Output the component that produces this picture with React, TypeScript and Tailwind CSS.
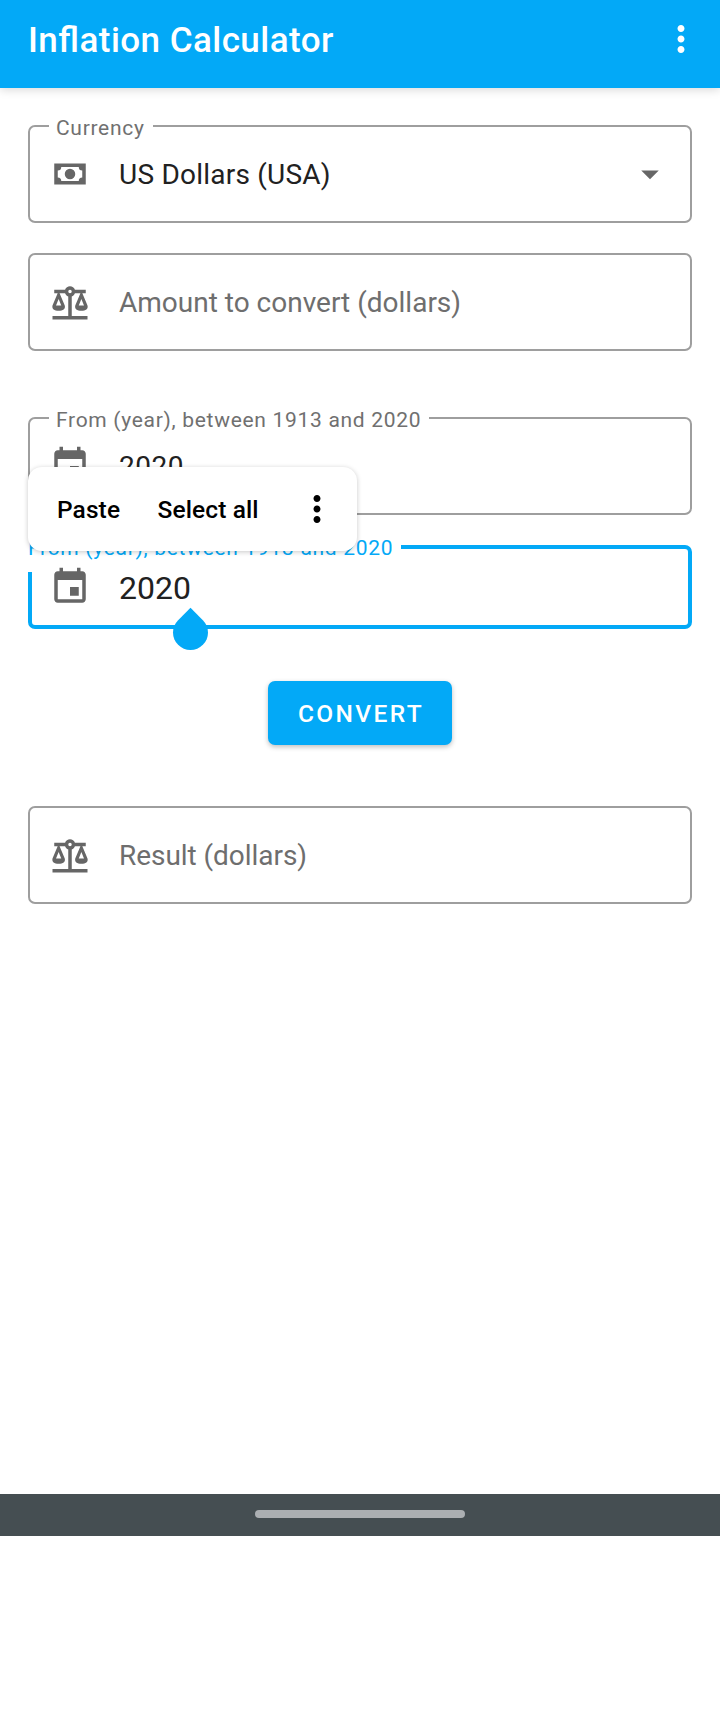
import type { ReactNode } from "react";

const CASH =
  "M3,6H21V18H3V6M12,9A3,3 0 0,1 15,12A3,3 0 0,1 12,15A3,3 0 0,1 9,12A3,3 0 0,1 12,9M7,8A2,2 0 0,1 5,10V14A2,2 0 0,1 7,16H17A2,2 0 0,1 19,14V10A2,2 0 0,1 17,8H7Z";
const SCALE =
  "M12,3C10.73,3 9.6,3.8 9.18,5H3V7H4.95L2,14C1.53,16 3,17 5.5,17C8,17 9.56,16 9,14L6.05,7H9.17C9.5,7.85 10.15,8.5 11,8.83V20H2V22H22V20H13V8.82C13.85,8.5 14.5,7.85 14.82,7H17.95L15,14C14.53,16 16,17 18.5,17C21,17 22.56,16 22,14L19.05,7H21V5H14.83C14.4,3.8 13.27,3 12,3M12,5A1,1 0 0,1 13,6A1,1 0 0,1 12,7A1,1 0 0,1 11,6A1,1 0 0,1 12,5M5.5,10.25L7,14H4L5.5,10.25M18.5,10.25L20,14H17L18.5,10.25Z";
const EVENT =
  "M17 12h-5v5h5v-5zM16 1v2H8V1H6v2H5c-1.11 0-1.99.9-1.99 2L3 19c0 1.1.89 2 2 2h14c1.1 0 2-.9 2-2V5c0-1.1-.9-2-2-2h-1V1h-2zm3 18H5V8h14v11z";
const MORE =
  "M12 8c1.1 0 2-.9 2-2s-.9-2-2-2-2 .9-2 2 .9 2 2 2zm0 2c-1.1 0-2 .9-2 2s.9 2 2 2 2-.9 2-2-.9-2-2-2zm0 6c-1.1 0-2 .9-2 2s.9 2 2 2 2-.9 2-2-.9-2-2-2z";
const ARROW = "M7 10l5 5 5-5z";

function Icon({ d, className = "" }: { d: string; className?: string }) {
  return (
    <svg viewBox="0 0 24 24" className={`size-[42px] shrink-0 ${className}`} fill="currentColor">
      <path d={d} fillRule="evenodd" />
    </svg>
  );
}

function Field({
  label,
  icon,
  children,
  trailing,
  className = "",
}: {
  label?: string;
  icon: string;
  children: ReactNode;
  trailing?: ReactNode;
  className?: string;
}) {
  return (
    <div
      className={`relative flex h-[98px] items-center rounded-[7px] border-2 border-[#9e9e9e] px-[19px] text-[28px] leading-[34px] ${className}`}
    >
      {label && (
        <span className="absolute -top-[13px] left-[19px] bg-white pr-2 pl-[7px] text-[21px] leading-[28px] tracking-[0.7px] whitespace-nowrap text-[#707070]">
          {label}
        </span>
      )}
      <Icon d={icon} className="text-[#666666]" />
      <div className="ml-7 flex-1 pt-0.5 whitespace-nowrap">{children}</div>
      {trailing}
    </div>
  );
}

export default function App() {
  return (
    <div className="flex h-[1712px] w-[720px] flex-col bg-white font-['Roboto',sans-serif] text-[#212121]">
      <header className="flex h-[88px] shrink-0 items-start justify-between bg-[#03a9f7] pt-[18px] pr-[18px] pl-7 text-white shadow-[0_2px_9px_rgba(0,0,0,0.15)]">
        <h1 className="pt-px text-[35px] leading-[44px] font-medium tracking-[0.45px] [font-feature-settings:'liga'_1]">
          Inflation Calculator
        </h1>
        <Icon d={MORE} />
      </header>

      <main className="flex flex-1 flex-col px-7 pt-[37px]">
        <Field label="Currency" icon={CASH} trailing={<Icon d={ARROW} className="text-[#666666]" />}>
          <span className="tracking-[0.22px]">US Dollars (USA)</span>
        </Field>
        <Field icon={SCALE} className="mt-[30px] text-[#6e6e6e]">
          Amount to convert (dollars)
        </Field>
        <Field label="From (year), between 1913 and 2020" icon={EVENT} className="mt-[66px]">
          <span className="tracking-[0.5px]">2020</span>
        </Field>

        <div className="relative mt-[30px] flex h-[84px] items-center rounded-[7px] border-4 border-[#03a9f7] px-[17px]">
          <span className="absolute -top-[16px] -left-1 h-[39px] w-[373px] overflow-hidden bg-white pt-px text-[21px] leading-[28px] tracking-[0.7px] whitespace-nowrap text-[#03a9f7]">
            From (year), between 1913 and 2020
          </span>
          <Icon d={EVENT} className="relative text-[#666666]" />
          <span className="relative ml-7 pt-0.5 text-[32px] leading-[38px]">2020</span>
          <div className="absolute top-[66px] left-[141px] size-[35px] rotate-45 rounded-full rounded-tl-[1px] bg-[#03a9f7]" />
          <div className="absolute -top-[82px] -left-1 flex h-[84px] w-[329px] items-center rounded-[14px] bg-white pt-0.5 pl-[29px] text-[24.5px] font-medium tracking-[0.1px] text-black shadow-[0_1px_5px_rgba(0,0,0,0.22)]">
            <span>Paste</span>
            <span className="ml-[37.5px]">Select all</span>
            <Icon d={MORE} className="absolute top-[21px] left-[268px]" />
          </div>
        </div>

        <button className="mt-[52px] flex h-16 w-[184px] items-center justify-center self-center rounded-[7px] bg-[#03a9f7] pt-0.5 pl-0.5 text-[24.5px] font-medium tracking-[2.4px] text-white shadow-[0_2px_5px_rgba(0,0,0,0.25)]">
          CONVERT
        </button>

        <Field icon={SCALE} className="mt-[61px] text-[#6e6e6e]">
          <span className="tracking-[-0.05px]">Result (dollars)</span>
        </Field>
      </main>

      <nav className="flex h-[42px] shrink-0 justify-center bg-[#454e52] pt-4">
        <div className="h-2 w-[210px] rounded-full bg-[#abafb2]" />
      </nav>
      <div className="h-44 shrink-0" />
    </div>
  );
}
